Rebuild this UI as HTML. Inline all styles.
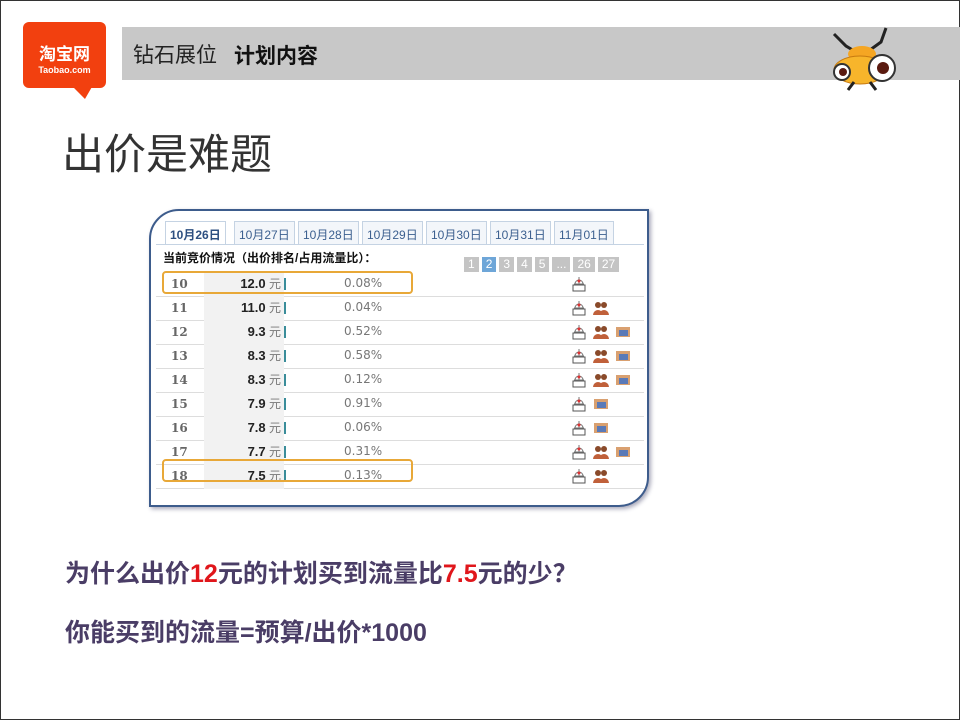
<!DOCTYPE html>
<html><head><meta charset="utf-8"><style>
*{margin:0;padding:0;box-sizing:border-box}
body{width:960px;height:720px;background:#fff;position:relative;overflow:hidden;font-family:"Liberation Sans","Noto Sans CJK SC",sans-serif;border:1px solid #333}
.a{position:absolute}
.bar{left:121px;top:26px;width:839px;height:53px;background:#c8c8c8}
.logo{left:22px;top:21px;width:83px;height:66px;background:#f2400f;border-radius:6px;color:#fff;text-align:center}
.row{position:absolute;left:155px;width:488px;height:24px;border-bottom:1px solid #ddd;font-size:12px;color:#555}
.row .n{position:absolute;left:15px;top:4px;font-weight:bold;color:#666;font-family:"DejaVu Serif",serif;font-size:12px}
.row .p{position:absolute;left:48px;width:80px;height:24px;background:#f2f2f2}
.row .pv{position:absolute;width:100px;text-align:right;top:2px;left:25px}
.row .pv b{color:#222;font-size:13px}
.row .pv span{color:#777}
.row .bar2{position:absolute;left:128px;top:5px;width:2px;height:12px;background:#3a8d9a}
.row .pc{position:absolute;left:188px;top:3px;color:#777;font-family:"DejaVu Sans",sans-serif;font-size:12px}
.ic{position:absolute;top:3px;width:16px;height:16px}
.tab{position:absolute;top:220px;height:23px;border:1px solid #c5d3e3;border-bottom:none;background:#f3f6fa;color:#3b5f8f;font-size:12px;padding:4px 4px 0}
.pg{display:inline-block;background:#c4c4c4;color:#fff;font-size:12px;height:15px;line-height:15px;padding:0 4px;margin-left:3px}
.hl{position:absolute;border:2px solid #e8a838;border-radius:4px;left:161px;width:251px;height:23px}
</style></head><body>
<div class="a bar"></div>
<div class="a logo"><div style="font-weight:bold;font-size:17px;margin-top:18px">淘宝网</div><div style="font-size:9px;font-weight:bold">Taobao.com</div></div>
<div class="a" style="left:66px;top:84px;width:0;height:0;border-left:22px solid transparent;border-top:14px solid #f2400f;transform:skewX(-30deg)"></div>
<div class="a" style="left:132px;top:38px;font-size:21px;color:#222">钻石展位</div>
<div class="a" style="left:233px;top:39px;font-size:21px;font-weight:bold;color:#111">计划内容</div>
<svg class="a" style="left:825px;top:25px" width="72" height="70" viewBox="0 0 72 70">
<path d="M8 8 L20 20 L30 26 M60 2 L55 16 L44 24" stroke="#222" stroke-width="3" fill="none"/>
<ellipse cx="36" cy="28" rx="14" ry="8" fill="#f5a623"/>
<ellipse cx="34" cy="44" rx="26" ry="14" fill="#f7b52b" stroke="#c77a10"/>
<circle cx="56" cy="42" r="13" fill="#fff" stroke="#333" stroke-width="2"/><circle cx="57" cy="42" r="6" fill="#5a1a10"/>
<circle cx="16" cy="46" r="8" fill="#fff" stroke="#333" stroke-width="2"/><circle cx="17" cy="46" r="4" fill="#5a1a10"/>
<path d="M28 56 L22 64 M44 56 L50 64" stroke="#222" stroke-width="3"/>
</svg>
<div class="a" style="left:61px;top:120px;font-size:42px;color:#333">出价是难题</div>

<div class="a" style="left:148px;top:208px;width:500px;height:298px;border:2px solid #3d5c8c;border-radius:30px 0 30px 0;box-shadow:2px 2px 4px #aab;background:#fff"></div>
<div class="tab" style="left:164px;height:24px;background:#fff;font-weight:bold;color:#2d4f80">10月26日</div>
<div class="tab" style="left:233px">10月27日</div>
<div class="tab" style="left:297px">10月28日</div>
<div class="tab" style="left:361px">10月29日</div>
<div class="tab" style="left:425px">10月30日</div>
<div class="tab" style="left:489px">10月31日</div>
<div class="tab" style="left:553px">11月01日</div>
<div class="a" style="left:155px;top:243px;width:488px;height:1px;background:#c5d3e3"></div>
<div class="a" style="left:162px;top:248px;font-size:12px;font-weight:bold;color:#111">当前竞价情况（出价排名/占用流量比）：</div>
<div class="a" style="left:460px;top:254px"><span class="pg">1</span><span class="pg" style="background:#6ea6d8">2</span><span class="pg">3</span><span class="pg">4</span><span class="pg">5</span><span class="pg">...</span><span class="pg">26</span><span class="pg">27</span></div>

<div id="rows"></div>
<script>
const d=[[10,"12.0","0.08%",1],[11,"11.0","0.04%",2],[12,"9.3","0.52%",3],[13,"8.3","0.58%",3],[14,"8.3","0.12%",3],[15,"7.9","0.91%","s"],[16,"7.8","0.06%","s"],[17,"7.7","0.31%",3],[18,"7.5","0.13%",2]];
const r='<svg class="ic" style="left:415px" viewBox="0 0 16 16"><path d="M8 1V9M3 8h10M4 8a4 4 0 0 1 8 0" stroke="#777" fill="none"/><rect x="2" y="9" width="12" height="6" fill="#fff" stroke="#555"/><circle cx="8" cy="5" r="1.5" fill="#d33"/></svg>';
const p=x=>'<svg class="ic" style="left:'+x+'px" viewBox="0 0 16 16"><circle cx="5" cy="5" r="3" fill="#8a4a2a"/><circle cx="11" cy="5" r="3" fill="#8a4a2a"/><path d="M0 15a5 5 0 0 1 10 0zM6 15a5 5 0 0 1 10 0z" fill="#c0603a"/></svg>';
const s=x=>'<svg class="ic" style="left:'+x+'px" viewBox="0 0 16 16"><rect x="1" y="3" width="14" height="10" fill="#d9a070"/><rect x="4" y="6" width="9" height="6" fill="#5a7ab8"/></svg>';
let h='';
d.forEach((e,i)=>{let ic=r;if(e[3]==2)ic+=p(437);if(e[3]==3)ic+=p(437)+s(459);if(e[3]=="s")ic+=s(437);
h+='<div class="row" style="top:'+(272+i*24)+'px"><div class="p"></div><div class="n">'+e[0]+'</div><div class="pv"><b>'+e[1]+'</b> <span>元</span></div><div class="bar2"></div><div class="pc">'+e[2]+'</div>'+ic+'</div>';});
document.getElementById('rows').innerHTML=h;
</script>
<div class="hl" style="top:270px"></div>
<div class="hl" style="top:458px"></div>

<div class="a" style="left:64px;top:553px;font-size:25px;font-weight:bold;color:#4a3d66">为什么出价<span style="color:#e0161b">12</span>元的计划买到流量比<span style="color:#e0161b">7.5</span>元的少？</div>
<div class="a" style="left:64px;top:612px;font-size:25px;font-weight:bold;color:#4a3d66">你能买到的流量=预算/出价*1000</div>
</body></html>
